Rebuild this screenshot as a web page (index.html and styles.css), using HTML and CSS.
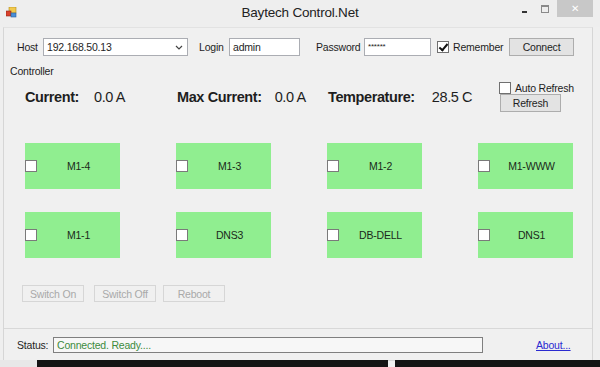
FILE: index.html
```html
<!DOCTYPE html>
<html lang="en">
<head>
    <meta charset="UTF-8">
    <title>Baytech Control.Net</title>
    <link rel="stylesheet" href="styles.css">
</head>
<body>
    <div class="window">
        <header class="titlebar">
            <svg class="app-icon" width="11" height="11" viewBox="0 0 11 11">
                <rect x="3" y="0" width="7" height="6" fill="#f2c94c" stroke="#b08a1e" stroke-width="0.6"/>
                <rect x="0" y="4" width="5" height="5" fill="#d9412b" stroke="#8f2415" stroke-width="0.6"/>
                <rect x="5" y="6" width="5" height="4" fill="#4a8fd8" stroke="#2b5e9c" stroke-width="0.6"/>
            </svg>
            <span class="title">Baytech Control.Net</span>
            <div class="caption">
                <span class="cap-min"></span>
                <span class="cap-max"></span>
                <span class="cap-close">&#x2715;</span>
            </div>
        </header>

        <main class="client">
            <div class="connbar">
                <span class="lbl lbl-host">Host</span>
                <div class="combo">
                    <span>192.168.50.13</span>
                    <svg width="8" height="5" viewBox="0 0 8 5"><path d="M1 1 L4 4 L7 1" fill="none" stroke="#444" stroke-width="1.2"/></svg>
                </div>
                <span class="lbl lbl-login">Login</span>
                <div class="field field-login">admin</div>
                <span class="lbl lbl-pass">Password</span>
                <div class="field field-pass">******</div>
                <span class="check checked"></span>
                <span class="lbl lbl-remember">Remember</span>
                <button class="btn btn-connect">Connect</button>
            </div>

            <section class="group">
                <div class="group-title">Controller</div>

                <div class="readings">
                    <div class="reading"><b>Current:</b><span>0.0 A</span></div>
                    <div class="reading reading-max"><b>Max Current:</b><span>0.0 A</span></div>
                    <div class="reading reading-temp"><b>Temperature:</b><span>28.5 C</span></div>
                    <div class="refresh-box">
                        <div class="auto"><span class="check"></span><span>Auto Refresh</span></div>
                        <button class="btn btn-refresh">Refresh</button>
                    </div>
                </div>

                <div class="outlets">
                    <div class="outlet"><span class="check"></span><span class="name">M1-4</span></div>
                    <div class="outlet"><span class="check"></span><span class="name">M1-3</span></div>
                    <div class="outlet"><span class="check"></span><span class="name">M1-2</span></div>
                    <div class="outlet"><span class="check"></span><span class="name">M1-WWW</span></div>
                    <div class="outlet"><span class="check"></span><span class="name">M1-1</span></div>
                    <div class="outlet"><span class="check"></span><span class="name">DNS3</span></div>
                    <div class="outlet"><span class="check"></span><span class="name">DB-DELL</span></div>
                    <div class="outlet"><span class="check"></span><span class="name">DNS1</span></div>
                </div>

                <div class="actions">
                    <button class="btn btn-off" disabled>Switch On</button>
                    <button class="btn btn-off" disabled>Switch Off</button>
                    <button class="btn btn-off" disabled>Reboot</button>
                </div>
            </section>

            <div class="statusbar">
                <span class="lbl lbl-status">Status:</span>
                <div class="status-box">Connected. Ready....</div>
                <a class="about" href="#">About...</a>
            </div>
        </main>
    </div>
    <div class="taskbar">
        <span class="tb-gap"></span>
        <span class="tb-left"></span>
        <span class="tb-right"></span>
    </div>
</body>
</html>
```

FILE: styles.css
```css
body {
    margin: 0;
    width: 600px;
    height: 367px;
    overflow: hidden;
    background: #f0f0f0;
    font-family: "Liberation Sans", Arial, sans-serif;
    font-size: 10.5px;
    letter-spacing: -0.2px;
    color: #1e1e1e;
}
.window {
    height: 360px;
    background: #efefef;
}

/* title bar */
.titlebar {
    height: 27px;
    display: grid;
    grid-template-columns: 1fr auto 1fr;
    align-items: start;
    background: #eeeeee;
}
.app-icon {
    margin: 7px 0 0 6px;
}
.title {
    padding-top: 5px;
    font-size: 13.5px;
    letter-spacing: -0.2px;
    color: #222;
}
.caption {
    justify-self: end;
    display: flex;
    align-items: flex-start;
    margin-right: 7px;
}
.cap-min {
    width: 5px;
    height: 2px;
    background: #333;
    margin: 11px 14px 0 0;
}
.cap-max {
    width: 6px;
    height: 5px;
    border: 1px solid #8a8a8a;
    border-top-width: 2px;
    margin: 5px 8px 0 0;
}
.cap-close {
    width: 36px;
    height: 17px;
    background: #c8c8c8;
    color: #fff;
    font-size: 10px;
    text-align: center;
    line-height: 17px;
}

/* client area */
.client {
    margin: 0 7px 0 3px;
    height: 332px;
    border: 1px solid #d6d6d6;
    border-top-color: #e2e2e2;
    background: #f0f0f0;
}
.connbar {
    display: flex;
    align-items: center;
    height: 18px;
    margin-top: 10px;
    padding-left: 13px;
}
.lbl {
    white-space: nowrap;
}
.lbl-host { width: 26px; }
.combo {
    width: 145px;
    height: 18px;
    box-sizing: border-box;
    border: 1px solid #abadb3;
    background: #fff;
    display: flex;
    align-items: center;
    justify-content: space-between;
    padding: 0 4px 0 3px;
}
.lbl-login { width: 30px; margin-left: 11px; }
.field {
    height: 18px;
    box-sizing: border-box;
    border: 1px solid #abadb3;
    background: #fff;
    padding: 2px 3px 0;
}
.field-login { width: 71px; }
.lbl-pass { width: 48px; margin-left: 16px; }
.field-pass { width: 67px; font-size: 8px; padding-top: 3px; }
.connbar .check { margin-left: 6px; }
.lbl-remember { width: 56px; margin-left: 4px; }

.check {
    display: inline-block;
    width: 12px;
    height: 12px;
    box-sizing: border-box;
    border: 1px solid #707070;
    background: #fff;
    flex-shrink: 0;
    position: relative;
}
.check.checked::after {
    content: "";
    position: absolute;
    left: 3px;
    top: 0px;
    width: 3px;
    height: 7px;
    border: solid #111;
    border-width: 0 2px 2px 0;
    transform: rotate(40deg);
}

.btn {
    font: inherit;
    letter-spacing: inherit;
    color: #1e1e1e;
    background: #e3e3e3;
    border: 1px solid #adadad;
    padding: 0;
    box-sizing: border-box;
}
.btn-connect { width: 65px; height: 18px; }

/* controller group */
.group {
    border-bottom: 1px solid #d8d8d8;
    height: 264px;
    box-sizing: border-box;
}
.group-title {
    margin: 9px 0 0 6px;
    line-height: 12px;
    height: 12px;
}
.readings {
    display: flex;
    align-items: flex-start;
    padding-left: 21px;
    margin-top: 3px;
    height: 32px;
}
.reading {
    width: 152px;
    padding-top: 8px;
    line-height: 18px;
    font-size: 14.5px;
    letter-spacing: -0.4px;
    white-space: nowrap;
}
.reading b { margin-right: 15px; }
.reading-max { width: 151px; }
.reading-max b { margin-right: 13px; }
.reading-temp { width: 171px; }
.reading-temp b { margin-right: 17px; }
.refresh-box {
    padding-top: 2px;
}
.auto {
    display: flex;
    align-items: center;
    gap: 4px;
    height: 12px;
}
.btn-refresh {
    width: 61px;
    height: 18px;
    margin-left: 1px;
}

.outlets {
    display: grid;
    grid-template-columns: repeat(4, 95px);
    column-gap: 56px;
    row-gap: 23px;
    padding-left: 21px;
    margin-top: 31px;
}
.outlet {
    height: 46px;
    background: #90ee90;
    display: flex;
    align-items: center;
}
.outlet .check { border-color: #7a7a7a; }
.outlet .name {
    flex: 1;
    text-align: center;
    color: #1b2a1b;
}

.actions {
    display: flex;
    padding-left: 18px;
    margin-top: 27px;
}
.btn-off {
    height: 17px;
    width: 62px;
    background: #f0f0f0;
    border-color: #d6d6d6;
    color: #a9a9a9;
    margin-right: 10px;
}
.btn-off:nth-child(2) { margin-right: 7px; }

/* status */
.statusbar {
    display: flex;
    align-items: center;
    height: 16px;
    margin-top: 8px;
    padding-left: 13px;
}
.lbl-status { width: 36px; }
.status-box {
    width: 430px;
    height: 16px;
    box-sizing: border-box;
    border: 1px solid #7f7f7f;
    background: #f7f7f7;
    color: #3d8b3d;
    padding: 1px 3px 0;
}
.about {
    margin-left: 53px;
    color: #2a2ad0;
    text-decoration: underline;
}

.taskbar {
    display: flex;
    height: 7px;
}
.tb-gap { width: 37px; background: #e8e8e8; }
.tb-left { width: 351px; background: #141414; }
.tb-right { flex: 1; margin-left: 7px; background: #141414; }
```
